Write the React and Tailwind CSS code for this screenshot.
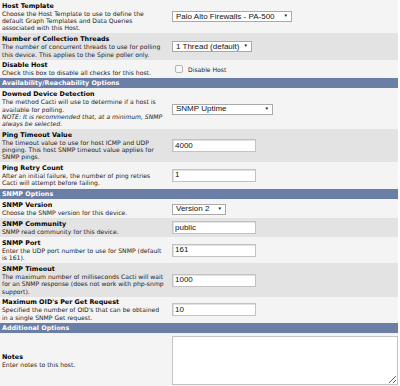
import React from "react";

const LIGHT = "bg-[#f4f4f4]";
const DARK = "bg-[#e3e3e3]";

const SelectBox = ({ value, width }) => (
  <div
    className={`flex items-center justify-between h-[11px] border border-[#a9a9a9] bg-white pl-[3px] pr-[3px] text-[8px] leading-none text-[#111] font-['Liberation_Sans',Arial,sans-serif] ${width}`}
  >
    <span>{value}</span>
    <span className="text-[4.5px]">▼</span>
  </div>
);

const TextBox = ({ value }) => (
  <div className="flex items-center w-[84px] h-[13px] border border-[#c2c2c2] bg-white pl-[2px] text-[8px] leading-none text-[#111] font-['Liberation_Sans',Arial,sans-serif] shadow-[inset_1px_1px_0_#e2e2e2]">
    {value}
  </div>
);

const Row = ({ title, lines, italic = [], bg, height, children }) => (
  <div className={`flex ${bg} ${height}`}>
    <div className="w-[172px] shrink-0 pl-[2px] flex flex-col justify-center">
      <div className="font-bold text-[6.4px] leading-[8px] text-black whitespace-nowrap">
        {title}
      </div>
      {lines.map((line, i) => (
        <div
          key={i}
          className={`text-[6.1px] leading-[7.3px] text-[#222] whitespace-nowrap ${italic.includes(i) ? "italic" : ""}`}
        >
          {line}
        </div>
      ))}
    </div>
    <div className="flex-1 flex items-center">{children}</div>
  </div>
);

const Header = ({ label }) => (
  <div className="flex items-center h-[12px] bg-[#6a7ea6] border-y border-[#f2f2f2] pl-[2px] text-white font-bold text-[6.4px] leading-none">
    {label}
  </div>
);

export default function App() {
  return (
    <div className="w-[400px] h-[386px] bg-white overflow-hidden font-['DejaVu_Sans',Verdana,sans-serif]">
      <div className="w-[398px]">
        <Row
          title="Host Template"
          lines={[
            "Choose the Host Template to use to define the",
            "default Graph Templates and Data Queries",
            "associated with this Host.",
          ]}
          bg={LIGHT}
          height="h-[33px]"
        >
          <SelectBox value="Palo Alto Firewalls - PA-500" width="w-[120px]" />
        </Row>
        <Row
          title="Number of Collection Threads"
          lines={[
            "The number of concurrent threads to use for polling",
            "this device. This applies to the Spine poller only.",
          ]}
          bg={DARK}
          height="h-[27px]"
        >
          <SelectBox value="1 Thread (default)" width="w-[80px]" />
        </Row>
        <Row
          title="Disable Host"
          lines={["Check this box to disable all checks for this host."]}
          bg={LIGHT}
          height="h-[17px]"
        >
          <div className="flex items-center pt-[2px]">
            <div className="ml-[3px] w-[8px] h-[8px] rounded-[2px] border border-[#b5b5b5] bg-[#f7f7f7]" />
            <span className="ml-[5px] text-[6.1px] text-[#222]">Disable Host</span>
          </div>
        </Row>
        <Header label="Availability/Reachability Options" />
        <Row
          title="Downed Device Detection"
          lines={[
            "The method Cacti will use to determine if a host is",
            "available for polling.",
            "NOTE: It is recommended that, at a minimum, SNMP",
            "always be selected.",
          ]}
          italic={[2, 3]}
          bg={LIGHT}
          height="h-[40px]"
        >
          <SelectBox value="SNMP Uptime" width="w-[101px]" />
        </Row>
        <Row
          title="Ping Timeout Value"
          lines={[
            "The timeout value to use for host ICMP and UDP",
            "pinging. This host SNMP timeout value applies for",
            "SNMP pings.",
          ]}
          bg={DARK}
          height="h-[33px]"
        >
          <TextBox value="4000" />
        </Row>
        <Row
          title="Ping Retry Count"
          lines={[
            "After an initial failure, the number of ping retries",
            "Cacti will attempt before failing.",
          ]}
          bg={LIGHT}
          height="h-[26px]"
        >
          <TextBox value="1" />
        </Row>
        <Header label="SNMP Options" />
        <Row
          title="SNMP Version"
          lines={["Choose the SNMP version for this device."]}
          bg={LIGHT}
          height="h-[18px]"
        >
          <SelectBox value="Version 2" width="w-[54px]" />
        </Row>
        <Row
          title="SNMP Community"
          lines={["SNMP read community for this device."]}
          bg={DARK}
          height="h-[19px]"
        >
          <TextBox value="public" />
        </Row>
        <Row
          title="SNMP Port"
          lines={[
            "Enter the UDP port number to use for SNMP (default",
            "is 161).",
          ]}
          bg={LIGHT}
          height="h-[26px]"
        >
          <TextBox value="161" />
        </Row>
        <Row
          title="SNMP Timeout"
          lines={[
            "The maximum number of milliseconds Cacti will wait",
            "for an SNMP response (does not work with php-snmp",
            "support).",
          ]}
          bg={DARK}
          height="h-[34px]"
        >
          <TextBox value="1000" />
        </Row>
        <Row
          title="Maximum OID's Per Get Request"
          lines={[
            "Specified the number of OID's that can be obtained",
            "in a single SNMP Get request.",
          ]}
          bg={LIGHT}
          height="h-[25px]"
        >
          <TextBox value="10" />
        </Row>
        <Header label="Additional Options" />
        <Row
          title="Notes"
          lines={["Enter notes to this host."]}
          bg={LIGHT}
          height="h-[53px]"
        >
          <textarea
            readOnly
            className="block w-[226px] h-[49px] border border-[#c2c2c2] bg-white outline-none"
          />
        </Row>
      </div>
    </div>
  );
}
